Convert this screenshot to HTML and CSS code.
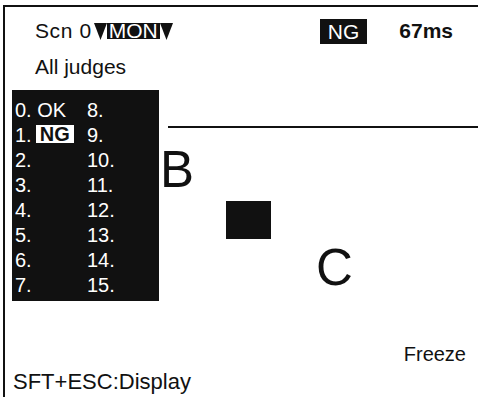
FILE: index.html
```html
<!DOCTYPE html>
<html lang="en">

<head>
    <title>Scn 0 Monitor</title>
    <link rel="stylesheet" href="styles.css">
</head>

<body>
    <div class="screen">
        <!-- Status line -->
        <div class="status">
            <span class="scene">Scn 0</span>
            <svg class="tri" viewBox="0 0 13 17"><polygon points="0,0 13,0 6.5,17" /></svg>
            <span class="mon">MON</span>
            <svg class="tri" viewBox="0 0 13 17"><polygon points="0,0 13,0 6.5,17" /></svg>
            <span class="ng-badge">NG</span>
            <span class="time">67ms</span>
        </div>
        <div class="subtitle">All judges</div>

        <!-- Judge list and image -->
        <div class="main">
            <div class="judges">
                <div>0. OK</div>
                <div>8.</div>
                <div>1.<span class="ng-tag">NG</span></div>
                <div>9.</div>
                <div>2.</div>
                <div>10.</div>
                <div>3.</div>
                <div>11.</div>
                <div>4.</div>
                <div>12.</div>
                <div>5.</div>
                <div>13.</div>
                <div>6.</div>
                <div>14.</div>
                <div>7.</div>
                <div>15.</div>
            </div>
            <div class="canvas">
                <div class="edge"></div>
                <div class="mark mark-b">B</div>
                <div class="block"></div>
                <div class="mark mark-c">C</div>
            </div>
        </div>

        <div class="freeze">Freeze</div>
        <div class="hint">SFT+ESC:Display</div>
    </div>
</body>

</html>
```

FILE: styles.css
```css
/* Reset */
* {
    margin: 0;
    padding: 0;
    box-sizing: border-box;
}

body {
    width: 478px;
    height: 397px;
    overflow: hidden;
    background-color: #ffffff;
    color: #111111;
    font-family: 'Liberation Sans', Arial, sans-serif;
    font-size: 20px;
    line-height: 24px;
}

/* Monitor frame */
.screen {
    margin: 5px 0 0 3px;
    height: 392px;
    border-top: 2px solid #111;
    border-left: 2px solid #111;
}

/* Status line */
.status {
    display: flex;
    align-items: center;
    height: 24px;
    margin-top: 12px;
    padding-left: 30px;
    font-size: 21px;
}

.scene {
    letter-spacing: 0.6px;
}

.tri {
    flex-shrink: 0;
    width: 13px;
    height: 17px;
    fill: #111;
    align-self: flex-start;
    margin-top: 4px;
}

.scene + .tri {
    margin-left: 2px;
}

.mon {
    background-color: #111;
    color: #fff;
    padding: 0 2px;
    line-height: 16px;
    height: 16px;
    align-self: flex-start;
    margin-top: 4px;
}

.ng-badge {
    margin-left: auto;
    background-color: #111;
    color: #fff;
    padding: 0 8px;
    line-height: 25px;
}

.time {
    font-weight: bold;
    margin-left: 32px;
    margin-right: 25px;
}

.subtitle {
    margin-top: 12px;
    padding-left: 30px;
    font-size: 21px;
}

/* Judge list */
.main {
    display: flex;
    margin-top: 11px;
    height: 211px;
}

.judges {
    margin-left: 7px;
    width: 147px;
    background-color: #111;
    color: #fff;
    padding: 8px 0 0 3px;
    display: grid;
    grid-template-columns: 72px 1fr;
    grid-auto-rows: 25px;
    line-height: 25px;
}

.ng-tag {
    display: inline-block;
    margin-left: 4px;
    padding: 0 4px;
    background-color: #fff;
    color: #111;
    font-weight: bold;
    line-height: 18px;
    vertical-align: 1px;
}

/* Image area */
.canvas {
    flex: 1;
    position: relative;
}

.edge {
    position: absolute;
    left: 9px;
    right: 0;
    top: 36px;
    height: 2px;
    background-color: #111;
}

.mark {
    position: absolute;
    font-size: 51px;
    line-height: 50px;
}

.mark-b {
    left: 1px;
    top: 55px;
}

.mark-c {
    left: 157px;
    top: 153px;
}

.block {
    position: absolute;
    left: 67px;
    top: 111px;
    width: 45px;
    height: 38px;
    background-color: #111;
}

/* Footer */
.freeze {
    margin-top: 41px;
    text-align: right;
    padding-right: 12px;
}

.hint {
    margin-top: 4px;
    padding-left: 8px;
    font-size: 22px;
}
```
